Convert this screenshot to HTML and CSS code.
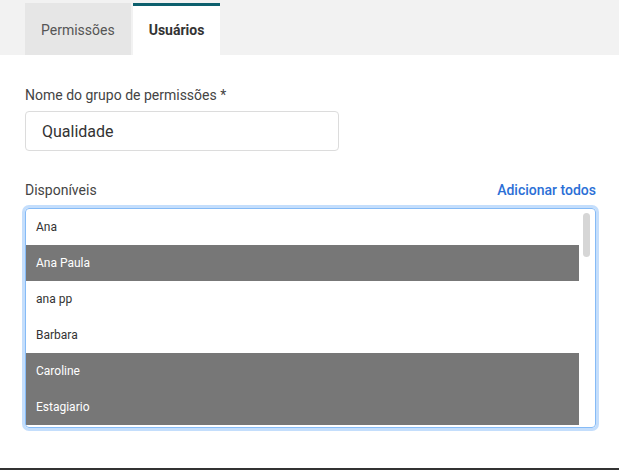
FILE: index.html
```html
<!DOCTYPE html>
<html lang="pt">
<head>
<meta charset="utf-8">
<title>Grupo de permissões</title>
<link rel="stylesheet" href="styles.css">
</head>
<body>
<div class="page">
  <nav class="tabs">
    <div class="tab">Permissões</div>
    <div class="tab active">Usuários</div>
  </nav>
  <main class="content">
    <label class="label" for="nome">Nome do grupo de permissões *</label>
    <input id="nome" class="input" type="text" value="Qualidade">
    <div class="list-head">
      <span class="label-inline">Disponíveis</span>
      <a class="link">Adicionar todos</a>
    </div>
    <div class="listbox">
      <div class="items">
        <div class="item">Ana</div>
        <div class="item selected">Ana Paula</div>
        <div class="item">ana pp</div>
        <div class="item">Barbara</div>
        <div class="item selected">Caroline</div>
        <div class="item selected">Estagiario</div>
      </div>
      <div class="scrolltrack"><div class="thumb"></div></div>
    </div>
  </main>
  <div class="spacer"></div>
  <div class="bottom-line"></div>
</div>
</body>
</html>
```
FILE: styles.css
```css
* { box-sizing: border-box; }
html, body { margin: 0; padding: 0; }
body {
  font-family: Roboto, "Liberation Sans", Arial, sans-serif;
  color: #333;
  background: #fff;
}
.page {
  height: 470px;
  display: flex;
  flex-direction: column;
  overflow: hidden;
}
.tabs {
  height: 55px;
  background: #f2f2f2;
  display: flex;
  align-items: flex-end;
  padding-left: 25px;
  gap: 2px;
}
.tab {
  height: 52px;
  padding: 0 16px;
  border-top: 3px solid #e6e6e6;
  background: #e6e6e6;
  font-size: 14px;
  color: #555;
  display: flex;
  align-items: center;
  padding-bottom: 1px;
}
.tab.active {
  background: #fff;
  border-top-color: #0c5f6d;
  color: #333;
  font-weight: 700;
}
.content {
  padding: 30px 23px 0 25px;
  display: flex;
  flex-direction: column;
}
.label {
  font-size: 14px;
  line-height: 20px;
  color: #444;
  margin-bottom: 6px;
}
.input {
  width: 314px;
  height: 40px;
  border: 1px solid #dcdcdc;
  border-radius: 4px;
  padding: 0 16px;
  font-family: inherit;
  font-size: 16px;
  color: #333;
  outline: none;
}
.list-head {
  margin-top: 29px;
  display: flex;
  justify-content: space-between;
  align-items: center;
  line-height: 20px;
  font-size: 14px;
}
.label-inline { color: #444; }
.link {
  color: #2b6fd6;
  font-weight: 500;
  cursor: pointer;
}
.listbox {
  margin-top: 8px;
  height: 220px;
  border: 1px solid #86bbf6;
  border-radius: 4px;
  box-shadow: 0 0 0 3px #c4defc;
  display: flex;
  overflow: hidden;
}
.items {
  flex: 1;
  overflow: hidden;
}
.scrolltrack {
  width: 16px;
  padding: 4px 5px 0 4px;
}
.thumb {
  width: 7px;
  height: 44px;
  border-radius: 4px;
  background: #d6d6d6;
}
.item {
  height: 36px;
  line-height: 36px;
  padding-left: 10px;
  font-size: 12px;
  color: #333;
}
.item.selected {
  background: #777;
  color: #fff;
}
.spacer { flex: 1; }
.bottom-line {
  height: 2px;
  background: #333;
}
```
